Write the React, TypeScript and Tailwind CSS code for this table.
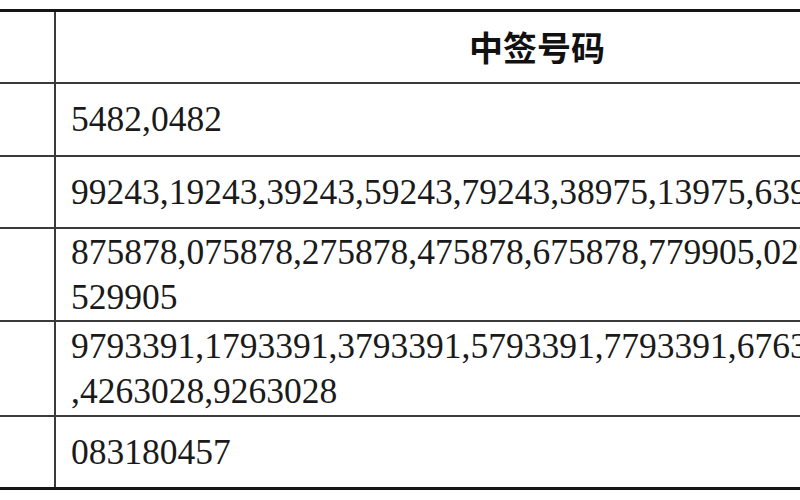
const serif = { fontFamily: '"Liberation Serif", "Times New Roman", serif' }

interface Row {
  lines: string[]
  height: string
}

const rows: Row[] = [
  { lines: ['5482,0482'], height: 'h-[73px]' },
  { lines: ['99243,19243,39243,59243,79243,38975,13975,63975,88975'], height: 'h-[72px]' },
  {
    lines: ['875878,075878,275878,475878,675878,779905,029905,279905,', '529905'],
    height: 'h-[93px]',
  },
  {
    lines: ['9793391,1793391,3793391,5793391,7793391,6763028,1763028', ',4263028,9263028'],
    height: 'h-[95px]',
  },
  { lines: ['083180457'], height: 'h-[70px]' },
]

export default function App() {
  return (
    <div className="w-[800px] h-[500px] bg-white overflow-hidden pt-[9px]">
      <div className="w-[1018px] border-t-[3px] border-b-[3px] border-[#151515]">
        {/* header */}
        <div className="flex h-[72px] border-b-2 border-[#3a3a3a]">
          <div className="w-[54px] shrink-0" />
          <div className="flex-1 border-l-2 border-[#3a3a3a] flex items-center justify-center">
            <span
              className="text-[34px] font-bold text-[#111] leading-none"
              style={{ fontFamily: '"Noto Sans CJK SC", "Noto Sans", sans-serif' }}
            >
              中签号码
            </span>
          </div>
        </div>

        {rows.map((row, i) => (
          <div
            key={i}
            className={`flex ${row.height} ${i < rows.length - 1 ? 'border-b-2 border-[#3a3a3a]' : ''}`}
          >
            <div className="w-[54px] shrink-0" />
            <div className="flex-1 border-l-2 border-[#3a3a3a] flex flex-col justify-center pl-[15px]">
              {row.lines.map((line, j) => (
                <div
                  key={j}
                  className="text-[35.5px] leading-[45px] text-[#1a1a1a] whitespace-nowrap"
                  style={serif}
                >
                  {line}
                </div>
              ))}
            </div>
          </div>
        ))}
      </div>
    </div>
  )
}
